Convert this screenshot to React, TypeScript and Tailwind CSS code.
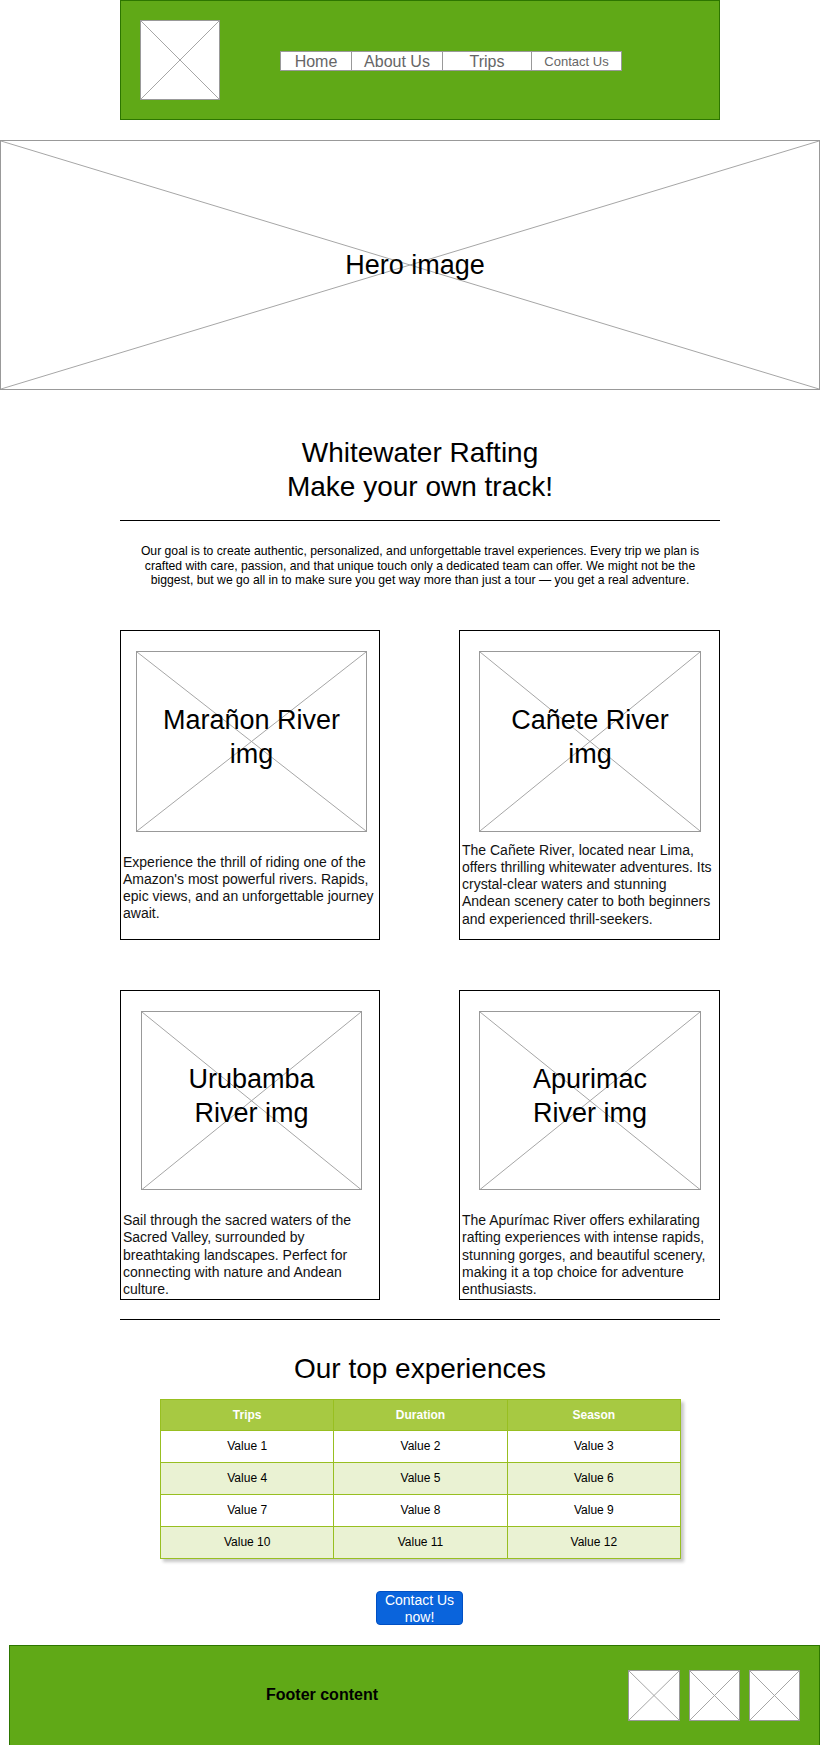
import type { ReactNode } from "react";

type PlaceholderProps = {
  className?: string;
  children?: ReactNode;
};

function Placeholder({ className = "", children }: PlaceholderProps) {
  return (
    <div className={`relative border border-[#999999] bg-white ${className}`}>
      <svg
        className="absolute inset-0 h-full w-full"
        viewBox="0 0 100 100"
        preserveAspectRatio="none"
      >
        <line x1="0" y1="0" x2="100" y2="100" stroke="#a6a6a6" strokeWidth="1" vectorEffect="non-scaling-stroke" />
        <line x1="100" y1="0" x2="0" y2="100" stroke="#a6a6a6" strokeWidth="1" vectorEffect="non-scaling-stroke" />
      </svg>
      {children && (
        <div className="relative flex h-full items-center justify-center text-center">{children}</div>
      )}
    </div>
  );
}

type CardProps = {
  title: string[];
  lines: string[];
  imgClass: string;
  textTop: string;
};

function RiverCard({ title, lines, imgClass, textTop }: CardProps) {
  return (
    <div className="flex h-[310px] flex-col border border-black bg-white">
      <Placeholder className={`mt-[20px] h-[181px] ${imgClass}`}>
        <div className="pb-[9px] text-[27px] leading-[34px] text-black">
          {title.map((t) => (
            <div key={t}>{t}</div>
          ))}
        </div>
      </Placeholder>
      <div className={`${textTop} whitespace-nowrap pl-[2px] text-[14px] leading-[17.3px] text-[#111]`}>
        {lines.map((l) => (
          <div key={l}>{l}</div>
        ))}
      </div>
    </div>
  );
}

const navItems = [
  { label: "Home", w: "w-[70px]", size: "text-[16px]" },
  { label: "About Us", w: "w-[91px]", size: "text-[16px]" },
  { label: "Trips", w: "w-[89px]", size: "text-[16px]" },
  { label: "Contact Us", w: "w-[90px]", size: "text-[13px]" },
];

const rows = [
  ["Value 1", "Value 2", "Value 3"],
  ["Value 4", "Value 5", "Value 6"],
  ["Value 7", "Value 8", "Value 9"],
  ["Value 10", "Value 11", "Value 12"],
];

export default function App() {
  return (
    <div className="min-h-[1745px] w-[821px] bg-white font-['Liberation_Sans',Arial,sans-serif] text-black">
      {/* header */}
      <header className="ml-[120px] flex h-[120px] w-[600px] items-center border border-[#2d7600] bg-[#60a917] pl-[19px]">
        <Placeholder className="h-[80px] w-[80px]" />
        <nav className="ml-[60px] mt-[2px] flex h-[20px] border border-[#999999] bg-white">
          {navItems.map((n, i) => (
            <div
              key={n.label}
              className={`${n.w} ${n.size} flex items-end justify-center leading-[17px] text-[#666666] ${
                i > 0 ? "border-l border-[#999999]" : ""
              }`}
            >
              {n.label}
            </div>
          ))}
        </nav>
      </header>

      {/* hero */}
      <Placeholder className="mt-[20px] h-[250px] w-[820px]">
        <span className="pl-[10px] text-[27px] leading-[32px] text-black">Hero image</span>
      </Placeholder>

      <main className="ml-[120px] w-[600px]">
        <h1 className="mt-[46px] text-center text-[28px] leading-[34px]">
          Whitewater Rafting
          <br />
          Make your own track!
        </h1>
        <hr className="mt-[16px] border-t border-black" />
        <p className="mt-[23px] whitespace-nowrap text-center text-[12.2px] leading-[14.5px]">
          Our goal is to create authentic, personalized, and unforgettable travel experiences. Every trip we plan is
          <br />
          crafted with care, passion, and that unique touch only a dedicated team can offer. We might not be the
          <br />
          biggest, but we go all in to make sure you get way more than just a tour — you get a real adventure.
        </p>

        <div className="mt-[42px] grid grid-cols-[260px_261px] justify-between gap-y-[50px]">
          <RiverCard
            title={["Marañon River", "img"]}
            imgClass="ml-[15px] w-[231px]"
            textTop="mt-[22px]"
            lines={[
              "Experience the thrill of riding one of the",
              "Amazon's most powerful rivers. Rapids,",
              "epic views, and an unforgettable journey",
              "await.",
            ]}
          />
          <RiverCard
            title={["Cañete River", "img"]}
            imgClass="ml-[19px] w-[222px]"
            textTop="mt-[10px]"
            lines={[
              "The Cañete River, located near Lima,",
              "offers thrilling whitewater adventures. Its",
              "crystal-clear waters and stunning",
              "Andean scenery cater to both beginners",
              "and experienced thrill-seekers.",
            ]}
          />
          <RiverCard
            title={["Urubamba", "River img"]}
            imgClass="ml-[20px] w-[221px]"
            textTop="mt-[22px]"
            lines={[
              "Sail through the sacred waters of the",
              "Sacred Valley, surrounded by",
              "breathtaking landscapes. Perfect for",
              "connecting with nature and Andean",
              "culture.",
            ]}
          />
          <RiverCard
            title={["Apurimac", "River img"]}
            imgClass="ml-[19px] w-[222px]"
            textTop="mt-[22px]"
            lines={[
              "The Apurímac River offers exhilarating",
              "rafting experiences with intense rapids,",
              "stunning gorges, and beautiful scenery,",
              "making it a top choice for adventure",
              "enthusiasts.",
            ]}
          />
        </div>

        <hr className="mt-[19px] border-t border-black" />
        <h2 className="mt-[32px] text-center text-[28px] leading-[34px]">Our top experiences</h2>

        <table className="ml-[40px] mt-[13px] w-[521px] table-fixed border-collapse shadow-[3px_3px_3px_rgba(0,0,0,0.22)]">
          <thead>
            <tr className="h-[31px] bg-[#a7c942]">
              {["Trips", "Duration", "Season"].map((h) => (
                <th key={h} className="border border-[#98bf21] text-center text-[12px] font-bold text-white">
                  {h}
                </th>
              ))}
            </tr>
          </thead>
          <tbody>
            {rows.map((r, i) => (
              <tr key={i} className={`h-[32px] ${i % 2 === 1 ? "bg-[#eaf2d3]" : "bg-white"}`}>
                {r.map((c) => (
                  <td key={c} className="border border-[#98bf21] text-center text-[12px] text-black">
                    {c}
                  </td>
                ))}
              </tr>
            ))}
          </tbody>
        </table>

        <div className="mt-[32px] flex justify-center">
          <button className="ml-[-1px] h-[34px] w-[87px] rounded-[4px] border border-[#0050c4] bg-[#0a64dc] text-[14px] leading-[17px] text-white">
            Contact Us
            <br />
            now!
          </button>
        </div>
      </main>

      {/* footer */}
      <footer className="ml-[9px] mt-[20px] flex h-[101px] w-[811px] items-center border border-[#2d7600] bg-[#60a917] pr-[19px]">
        <div className="ml-[256px] text-[16px] font-bold text-black">Footer content</div>
        <div className="ml-auto flex gap-[9px]">
          <Placeholder className="h-[51px] w-[52px]" />
          <Placeholder className="h-[51px] w-[51px]" />
          <Placeholder className="h-[51px] w-[51px]" />
        </div>
      </footer>
    </div>
  );
}
